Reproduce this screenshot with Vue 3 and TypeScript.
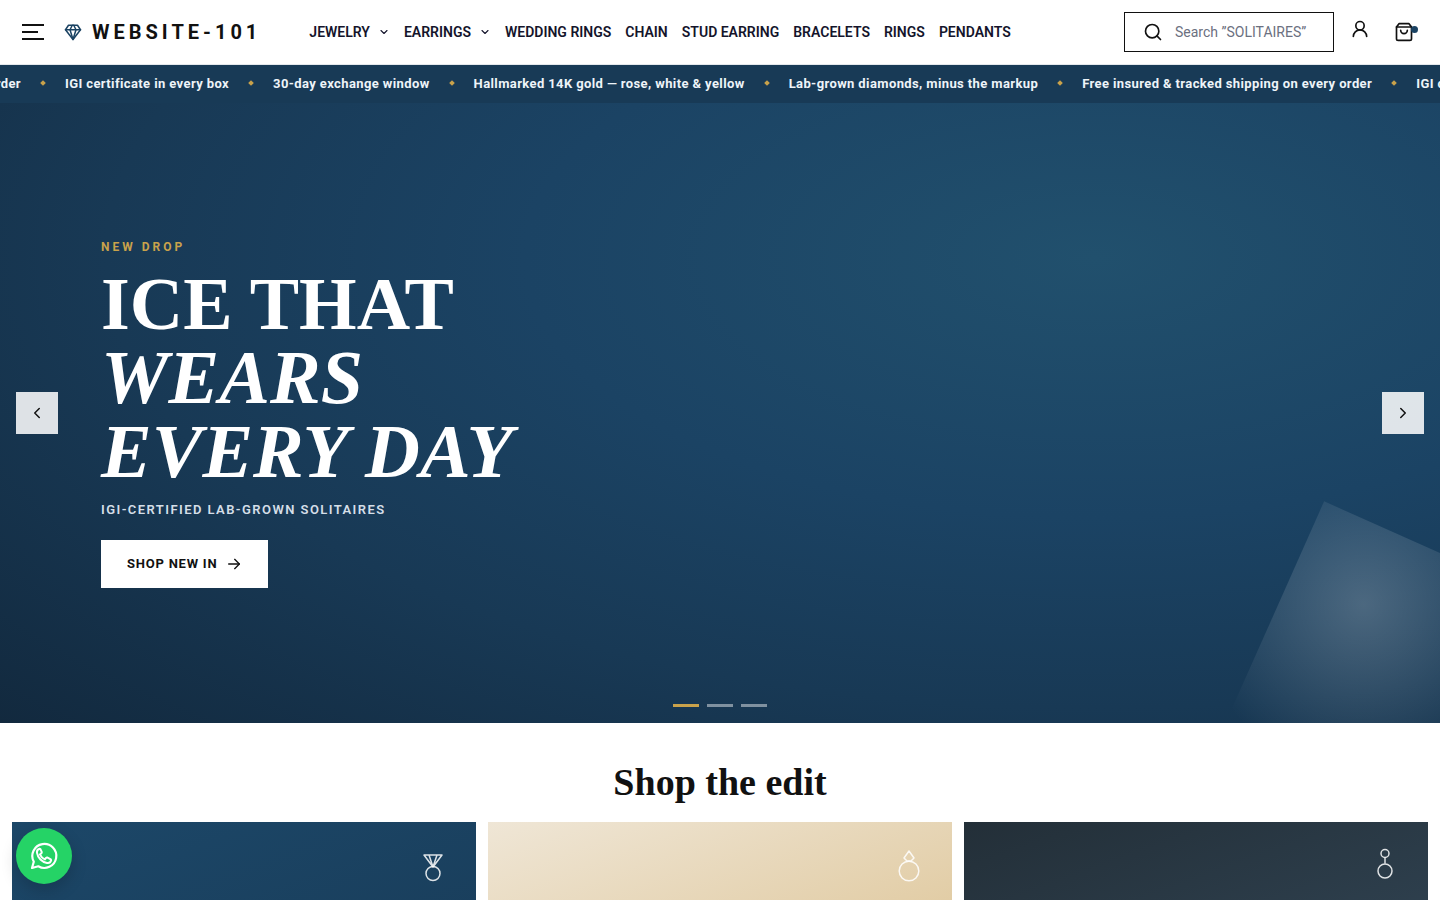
<script setup lang="ts">
import { ref } from 'vue'

interface NavItem { label: string; menu?: boolean }

const nav: NavItem[] = [
  { label: 'JEWELRY', menu: true },
  { label: 'EARRINGS', menu: true },
  { label: 'WEDDING RINGS' },
  { label: 'CHAIN' },
  { label: 'STUD EARRING' },
  { label: 'BRACELETS' },
  { label: 'RINGS' },
  { label: 'PENDANTS' },
]

const ticker: string[] = [
  'Free insured & tracked shipping on every order',
  'IGI certificate in every box',
  '30-day exchange window',
  'Hallmarked 14K gold — rose, white & yellow',
  'Lab-grown diamonds, minus the markup',
  'Free insured & tracked shipping on every order',
  'IGI certificate in every box',
]

const slides = 3
const active = ref(0)
const query = ref('')
const step = (by: number) => { active.value = (active.value + by + slides) % slides }
</script>

<template>
  <div class="page">
    <header class="header">
      <button class="burger" type="button" aria-label="Open menu"><i></i><i class="short"></i><i></i></button>
      <a class="logo" href="#">
        <svg width="18" height="18" viewBox="0 0 24 24" fill="none" stroke="currentColor" stroke-width="2" stroke-linecap="round" stroke-linejoin="round" aria-hidden="true">
          <path d="M6 3h12l4 6-10 13L2 9Z" /><path d="M11 3 8 9l4 13 4-13-3-6" /><path d="M2 9h20" />
        </svg>
        <span>WEBSITE-101</span>
      </a>
      <nav class="nav" aria-label="Main">
        <a v-for="item in nav" :key="item.label" href="#">
          {{ item.label }}
          <svg v-if="item.menu" width="12" height="12" viewBox="0 0 24 24" fill="none" stroke="currentColor" stroke-width="2.2" stroke-linecap="round" stroke-linejoin="round" aria-hidden="true"><path d="m6 9 6 6 6-6" /></svg>
        </a>
      </nav>
      <label class="search">
        <svg width="20" height="20" viewBox="0 0 24 24" fill="none" stroke="currentColor" stroke-width="2" stroke-linecap="round" aria-hidden="true"><circle cx="11" cy="11" r="8" /><path d="m21 21-4.3-4.3" /></svg>
        <input v-model="query" type="text" aria-label="Search" placeholder="Search &rdquo;SOLITAIRES&rdquo;" />
      </label>
      <a class="account" href="#" aria-label="Account">
        <svg width="20" height="20" viewBox="0 0 24 24" fill="none" stroke="currentColor" stroke-width="2" stroke-linecap="round" stroke-linejoin="round"><circle cx="12" cy="8" r="5" /><path d="M20 21a8 8 0 0 0-16 0" /></svg>
      </a>
      <button class="bag" type="button" aria-label="Shopping bag">
        <svg width="20" height="20" viewBox="0 0 24 24" fill="none" stroke="currentColor" stroke-width="2" stroke-linecap="round" stroke-linejoin="round"><path d="M6 2 3 6v14a2 2 0 0 0 2 2h14a2 2 0 0 0 2-2V6l-3-4Z" /><path d="M3 6h18" /><path d="M16 10a4 4 0 0 1-8 0" /></svg>
        <span class="dot"></span>
      </button>
    </header>

    <div class="ticker">
      <div class="track">
        <template v-for="(text, i) in ticker" :key="i">
          <span>{{ text }}</span><i class="gem"></i>
        </template>
      </div>
    </div>

    <section class="hero">
      <div class="facet"></div>
      <button class="arrow prev" type="button" aria-label="Previous slide" @click="step(-1)">
        <svg width="18" height="18" viewBox="0 0 24 24" fill="none" stroke="currentColor" stroke-width="2" stroke-linecap="round" stroke-linejoin="round"><path d="m15 18-6-6 6-6" /></svg>
      </button>
      <div class="copy">
        <p class="eyebrow">NEW DROP</p>
        <h1>ICE THAT<br /><em>WEARS<br />EVERY DAY</em></h1>
        <p class="sub">IGI-CERTIFIED LAB-GROWN SOLITAIRES</p>
        <a class="cta" href="#">
          SHOP NEW IN
          <svg width="16" height="16" viewBox="0 0 24 24" fill="none" stroke="currentColor" stroke-width="2" stroke-linecap="round" stroke-linejoin="round" aria-hidden="true"><path d="M4 12h16" /><path d="m13 5 7 7-7 7" /></svg>
        </a>
      </div>
      <button class="arrow next" type="button" aria-label="Next slide" @click="step(1)">
        <svg width="18" height="18" viewBox="0 0 24 24" fill="none" stroke="currentColor" stroke-width="2" stroke-linecap="round" stroke-linejoin="round"><path d="m9 18 6-6-6-6" /></svg>
      </button>
      <div class="dashes">
        <button v-for="n in slides" :key="n" type="button" :class="{ on: active === n - 1 }" :aria-label="`Slide ${n}`" @click="active = n - 1"></button>
      </div>
    </section>

    <section class="edit">
      <h2>Shop the edit</h2>
      <div class="cards">
        <a class="card blue" href="#" aria-label="Pendants">
          <svg width="34" height="34" viewBox="0 0 34 34" fill="none" stroke="currentColor" stroke-width="1.5" stroke-linejoin="round"><circle cx="17" cy="23.5" r="7" /><path d="M8 5h18l-9 12ZM13 5l4 12 4-12" /></svg>
        </a>
        <a class="card sand" href="#" aria-label="Rings">
          <svg width="34" height="34" viewBox="0 0 34 34" fill="none" stroke="currentColor" stroke-width="1.5" stroke-linejoin="round"><circle cx="17" cy="21" r="9.8" /><path d="m17 1 5 7-3 3h-4l-3-3Z" /></svg>
        </a>
        <a class="card slate" href="#" aria-label="Earrings">
          <svg width="34" height="34" viewBox="0 0 34 34" fill="none" stroke="currentColor" stroke-width="1.5"><circle cx="17" cy="3.5" r="4" /><path d="M17 7.5v6" /><circle cx="17" cy="21" r="7" /></svg>
        </a>
      </div>
    </section>

    <a class="whatsapp" href="#" aria-label="Chat on WhatsApp">
      <svg width="28" height="28" viewBox="0 0 28 28" fill="none" stroke="currentColor" stroke-width="2.2" stroke-linecap="round" stroke-linejoin="round"><path d="M2 26l1.8-6.3A12 12 0 1 1 8.3 24.3Z" /><path stroke-width="2" d="M9.600 6.800C7.800 7.300 6.700 8.900 7 10.900c.8 5 5 9.200 10 10 2 .3 3.700-.9 4.100-2.700l-.3-.8-3.700-2-.8.2-1.400 1.800c-2.300-1-4-2.700-5-5l1.700-1.500.2-.8-1.500-3.200Z" /></svg>
    </a>
  </div>
</template>

<style>
body { margin: 0; overflow: hidden; }
</style>

<style scoped>
.page {
  height: 100vh;
  overflow: hidden;
  background: #fff;
  color: #111;
  font-family: Roboto, "Liberation Sans", sans-serif;
}
.page *, .page *::before { box-sizing: border-box; }
a { color: inherit; text-decoration: none; }
button { border: 0; padding: 0; background: none; color: inherit; font: inherit; cursor: pointer; }
svg { flex: none; overflow: visible; }

.header {
  display: flex;
  align-items: center;
  height: 65px;
  padding: 0 22px;
  border-bottom: 1px solid #e4e8ec;
}
.burger { display: flex; flex-direction: column; gap: 5px; width: 22px; margin-right: 20px; }
.burger i { height: 2px; background: #111; }
.burger .short { width: 16px; }
.logo { display: flex; align-items: center; gap: 10px; font-size: 20px; font-weight: 700; letter-spacing: 4px; }
.logo svg { color: #1b4363; }
.nav { display: flex; flex: 1; gap: 14px; margin-left: 48px; color: #14142b; font-size: 14px; font-weight: 600; white-space: nowrap; }
.nav a { display: flex; align-items: center; gap: 8px; }
.search {
  display: flex;
  align-items: center;
  gap: 12px;
  width: 210px;
  height: 40px;
  padding: 0 18px;
  border: 1px solid #111;
}
.search input {
  flex: 1;
  min-width: 0;
  border: 0;
  padding: 0;
  outline: none;
  background: none;
  color: #111;
  font: 400 14px Roboto, "Liberation Sans", sans-serif;
}
.search input::placeholder { color: #6b7080; opacity: 1; }
.account { margin: 0 24px 0 16px; font-size: 16px; line-height: 24px; }
.bag { position: relative; display: flex; margin-right: 4px; }
.dot { position: absolute; top: 4px; right: -4px; width: 7px; height: 7px; border-radius: 50%; background: #1b4363; }

.ticker { overflow: hidden; height: 38px; background: #183a56; color: #eef4f9; }
.track {
  display: flex;
  align-items: center;
  gap: 20px;
  width: max-content;
  height: 36px;
  transform: translateX(-269px);
  font-size: 13px;
  font-weight: 700;
  letter-spacing: 0.03em;
  white-space: nowrap;
}
.gem { width: 4px; height: 4px; background: #c9a24b; rotate: 45deg; }

.hero {
  position: relative;
  display: flex;
  align-items: center;
  height: 620px;
  padding: 0 101px;
  overflow: hidden;
  color: #fff;
  background: radial-gradient(104% 110% at 76% 25%, #21506d 0%, #1b4364 38%, #183955 66%, #12293e 100%);
}
.facet {
  position: absolute;
  right: -80px;
  bottom: -80px;
  width: 260px;
  height: 260px;
  background: radial-gradient(circle at 30% 30%, rgba(255, 255, 255, 0.22), transparent 66%);
  transform: rotate(24deg);
}
.arrow {
  position: absolute;
  top: 289px;
  display: grid;
  place-items: center;
  width: 42px;
  height: 42px;
  background: rgba(255, 255, 255, 0.86);
  color: #111;
}
.prev { left: 16px; }
.next { right: 16px; }
.copy { display: flex; flex-direction: column; align-items: flex-start; }
.copy p, .copy h1 { margin: 0; }
.eyebrow { color: #c9a24b; font-size: 12px; font-weight: 700; line-height: 16px; letter-spacing: 3px; }
.copy h1 {
  padding: 13px 0;
  font: 700 74px/73px "Liberation Serif", "Times New Roman", serif;
}
.copy em { font-size: 76px; }
.sub { color: #d5dfe8; font-size: 13px; font-weight: 600; line-height: 16px; letter-spacing: 0.11em; }
.cta {
  display: flex;
  align-items: center;
  gap: 9px;
  height: 48px;
  margin-top: 22px;
  padding: 0 26px;
  background: #fff;
  color: #111;
  font-size: 13px;
  font-weight: 700;
  letter-spacing: 0.06em;
}
.dashes { position: absolute; bottom: 16px; left: 0; right: 0; display: flex; justify-content: center; gap: 8px; }
.dashes button { width: 26px; height: 3px; background: rgba(255, 255, 255, 0.45); }
.dashes .on { background: #c9a24b; }

.edit { padding: 35px 12px 0; }
.edit h2 { margin: 0 0 16px; font: 700 38px/48px "Liberation Serif", "Times New Roman", serif; text-align: center; }
.cards { display: grid; grid-template-columns: repeat(3, 1fr); gap: 12px; }
.card { display: flex; justify-content: flex-end; height: 240px; padding: 28px 26px; color: rgba(255, 255, 255, 0.85); }
.blue { background: linear-gradient(160deg, #1c4768, #183a56); }
.sand { background: linear-gradient(160deg, #efe6d6, #e2cda6 60%, #d9bf8e); }
.slate { background: linear-gradient(160deg, #232f38, #34495a); }

.whatsapp {
  position: fixed;
  left: 16px;
  bottom: 16px;
  display: grid;
  place-items: center;
  width: 56px;
  height: 56px;
  border-radius: 50%;
  background: #25d366;
  color: #fff;
  box-shadow: 0 6px 16px rgba(0, 0, 0, 0.18);
}
</style>
